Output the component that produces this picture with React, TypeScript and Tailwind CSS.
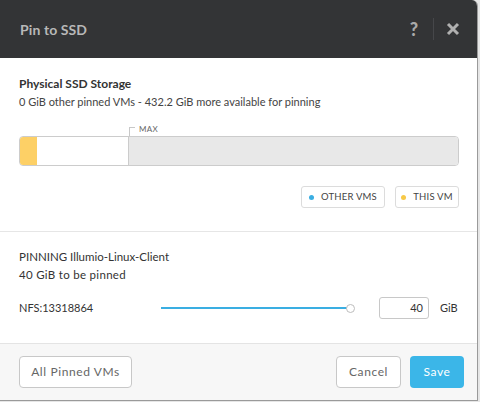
import React from "react";

export default function App() {
  const font = { fontFamily: "Lato, 'Open Sans', Arial, sans-serif" };
  return (
    <div className="w-[480px] h-[402px] bg-[#e6e6e6]" style={font}>
      <div className="w-[478px] h-[401px] bg-white rounded-tr-[6px] overflow-hidden border-r border-b border-[#9a9a9a] flex flex-col">
        {/* Header */}
        <div className="h-[58px] bg-[#333436] flex items-center pl-[20px] pr-[12px] shrink-0">
          <div className="text-[14px] font-bold text-[#b8b8b8] flex-1 tracking-[0.1px]">Pin to SSD</div>
          <div className="text-[18px] font-black text-[#a9a9a9] w-[16px] text-center mr-[11px]">?</div>
          <div className="w-px h-[22px] bg-[#46474a] mr-[12px]" />
          <svg width="14" height="14" viewBox="0 0 14 14" className="mr-[5px]">
            <path d="M2 2 L12 12 M12 2 L2 12" stroke="#b0b0b0" strokeWidth="3" strokeLinecap="butt" />
          </svg>
        </div>

        {/* Storage section */}
        <div className="px-[19px] pt-[18px] h-[174px] border-b border-[#e6e6e6] shrink-0">
          <div className="text-[12px] font-bold text-[#333] leading-[16px]">Physical SSD Storage</div>
          <div className="text-[11px] text-[#444] leading-[16px] mt-[2px]">
            0 GiB other pinned VMs - 432.2 GiB more available for pinning
          </div>
          <div className="relative mt-[16px]">
            <div className="flex items-center h-[10px] pl-[110px]">
              <div className="w-px h-[9px] bg-[#c8c8c8] self-end" />
              <div className="w-[5px] h-px bg-[#c8c8c8] self-start mt-[1px]" />
              <div className="text-[8px] text-[#666] ml-[4px] leading-[8px] -mt-[4px] tracking-[0.3px]">MAX</div>
            </div>
            <div className="flex h-[30px] border border-[#cccccc] rounded-[4px] overflow-hidden w-[440px]">
              <div className="w-[17px] bg-[#fdd066]" />
              <div className="w-[92px] bg-white border-r border-[#cccccc]" />
              <div className="flex-1 bg-[#e8e8e8]" />
            </div>
          </div>
          <div className="flex justify-end gap-[10px] mt-[20px] w-[440px]">
            <div className="flex items-center justify-center w-[84px] h-[22px] border border-[#dcdcdc] rounded-[3px] text-[9.5px] text-[#444] tracking-[0.2px]">
              <span className="w-[5px] h-[5px] rounded-full bg-[#3aaee2] mr-[7px]" />
              OTHER VMS
            </div>
            <div className="flex items-center justify-center w-[64px] h-[22px] border border-[#dcdcdc] rounded-[3px] text-[9.5px] text-[#444] tracking-[0.2px]">
              <span className="w-[5px] h-[5px] rounded-full bg-[#f7c948] mr-[7px]" />
              THIS VM
            </div>
          </div>
        </div>

        {/* Pinning section */}
        <div className="px-[19px] pt-[17px] flex-1">
          <div className="text-[11.5px] text-[#333] leading-[16px]">PINNING Illumio-Linux-Client</div>
          <div className="text-[11.5px] text-[#333] leading-[16px] mt-[2px] tracking-[0.3px]">40 GiB to be pinned</div>
          <div className="flex items-center mt-[14px] h-[22px]">
            <div className="text-[11px] text-[#333] w-[142px]">NFS:13318864</div>
            <div className="relative w-[194px] h-[10px] flex items-center">
              <div className="w-[188px] h-[2px] bg-[#3aaee2]" />
              <div className="w-[9px] h-[9px] rounded-full bg-white border border-[#bdbdbd] -ml-[2px]" />
            </div>
            <div className="ml-[24px] w-[50px] h-[22px] border border-[#c8c8c8] rounded-[3px] flex items-center justify-end pr-[5px] text-[11px] text-[#333]">
              40
            </div>
            <div className="ml-[11px] text-[11px] text-[#333]">GiB</div>
          </div>
        </div>

        {/* Footer */}
        <div className="h-[57px] bg-[#f7f7f7] border-t border-[#e4e4e4] flex items-center px-[19px] shrink-0">
          <button className="h-[32px] w-[113px] border border-[#c8c8c8] rounded-[4px] bg-white text-[12px] text-[#666] tracking-[0.6px]">
            All Pinned VMs
          </button>
          <div className="flex-1" />
          <button className="h-[32px] w-[65px] border border-[#c8c8c8] rounded-[4px] bg-white text-[12px] text-[#666] tracking-[0.6px]">
            Cancel
          </button>
          <button className="h-[32px] w-[54px] ml-[9px] mr-[-6px] rounded-[4px] bg-[#3bb6e8] text-[12px] text-white tracking-[0.6px]">
            Save
          </button>
        </div>
      </div>
    </div>
  );
}
